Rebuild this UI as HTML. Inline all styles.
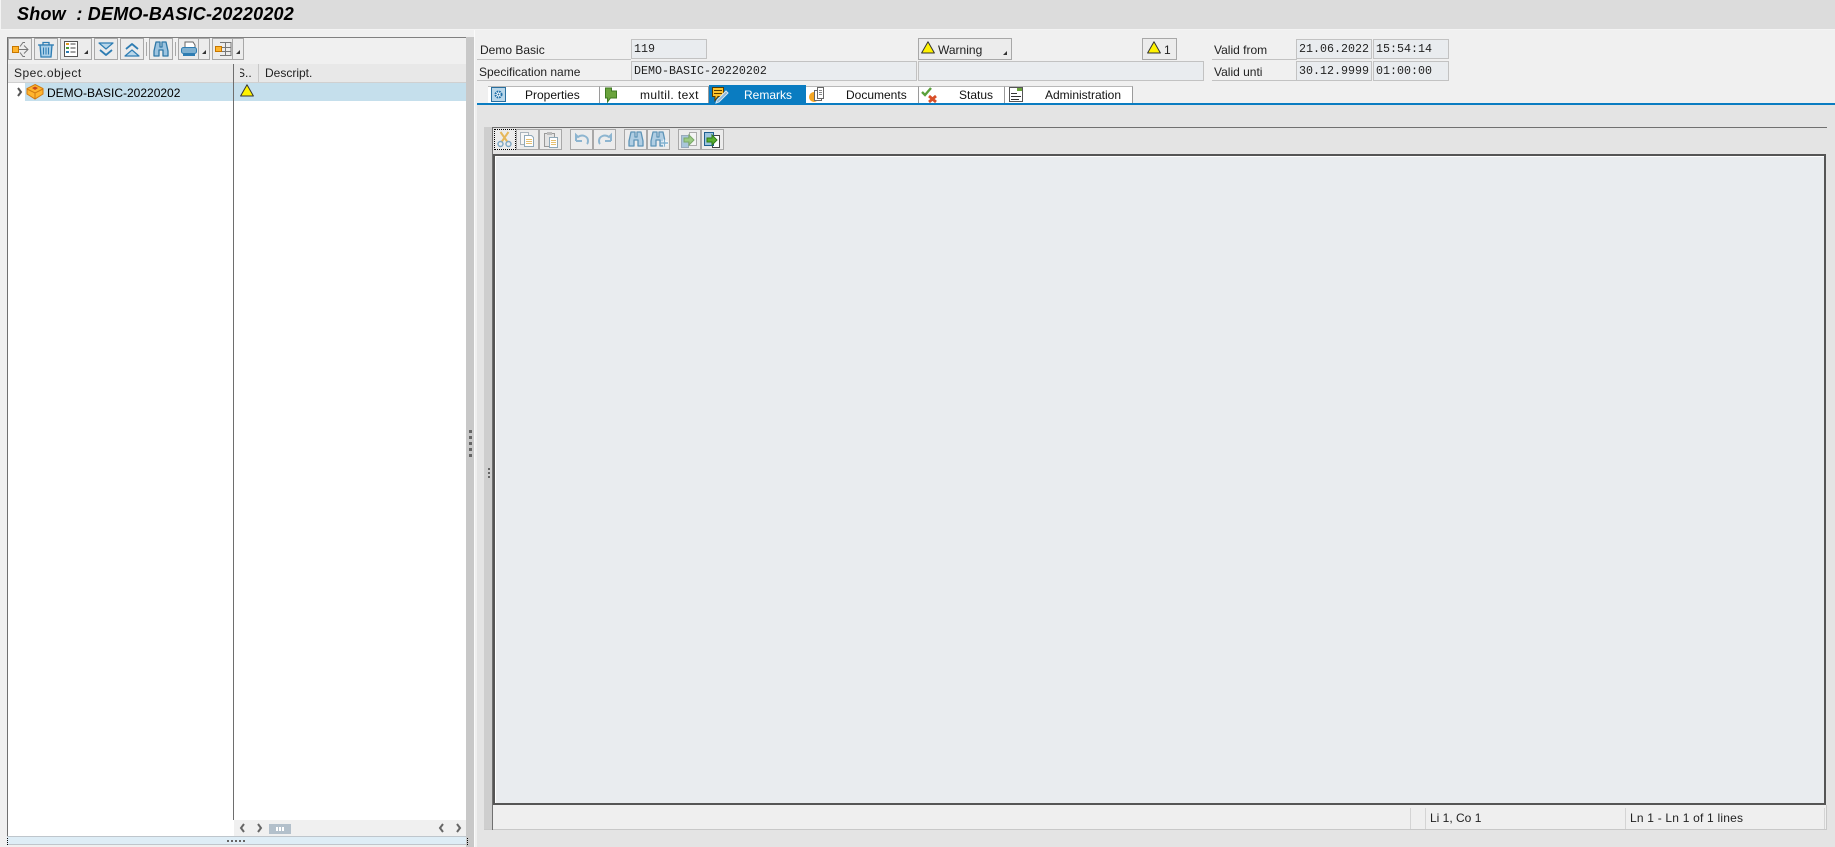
<!DOCTYPE html>
<html><head><meta charset="utf-8"><style>
html,body{margin:0;padding:0;background:#f0f0f0}
body{width:1835px;height:847px;position:relative;overflow:hidden;font-family:"Liberation Sans",sans-serif;font-size:12px;color:#000}
div{position:absolute;box-sizing:border-box}
.t{white-space:pre;line-height:14px;height:14px}
.m{font-family:"Liberation Mono",monospace;font-size:11.67px;color:#222}
.f{background:#e9ecef;border:1px solid #c2c2c2}
.b{background:#ececec;border:1px solid #a8a8a8}
.tab{background:#fff;border-top:1px solid #b8b8b8;border-right:1px solid #9a9a9a;height:17px;top:86px}
.u{height:1px;background:#c2c2c2}
svg{position:absolute;left:0;top:0}
</style></head><body>
<div style="left:0;top:0;width:1835px;height:30px;background:#f4f4f4"></div>
<div style="left:1px;top:0;width:1834px;height:29px;background:#dcdcdc"></div>
<div class="t" style="left:17px;top:4px;font:italic bold 18px/20px 'Liberation Sans',sans-serif;height:20px;letter-spacing:.22px">Show  : DEMO-BASIC-20220202</div>

<!-- left panel -->
<div style="left:7px;top:37px;width:460px;height:800px;background:#fff;border-left:1px solid #707070;border-top:1px solid #808080"></div>
<div style="left:8px;top:38px;width:459px;height:26px;background:#f0f0f0"></div>
<div style="left:8px;top:64px;width:459px;height:19px;background:#e8e8e8;border-bottom:1px solid #d0d0d0"></div>
<div style="left:25px;top:83px;width:441px;height:18px;background:#c5dfec"></div>
<div style="left:233px;top:64px;width:1px;height:756px;background:#6e6e6e"></div>
<div style="left:258px;top:64px;width:1px;height:18px;background:#c8c8c8"></div>
<div class="t" style="left:14px;top:66px;color:#222;letter-spacing:.45px">Spec.object</div>
<div style="left:240px;top:66px;width:16px;height:14px;overflow:hidden"><div class="t" style="left:-3px;top:0;color:#222">S..</div></div>
<div class="t" style="left:265px;top:66px;color:#222">Descript.</div>
<div class="t" style="left:47px;top:86px">DEMO-BASIC-20220202</div>

<div class="b" style="left:8px;top:38px;width:24px;height:22px"></div>
<div class="b" style="left:34px;top:38px;width:24px;height:22px"></div>
<div class="b" style="left:60px;top:38px;width:32px;height:22px"></div>
<div class="b" style="left:94px;top:38px;width:24px;height:22px"></div>
<div class="b" style="left:120px;top:38px;width:24px;height:22px"></div>
<div style="left:146px;top:42px;width:1px;height:14px;background:#a8a8a8"></div>
<div class="b" style="left:149px;top:38px;width:24px;height:22px"></div>
<div style="left:175px;top:42px;width:1px;height:14px;background:#a8a8a8"></div>
<div class="b" style="left:178px;top:38px;width:32px;height:22px"></div>
<div style="left:198px;top:38px;width:1px;height:22px;background:#a8a8a8"></div>
<div class="b" style="left:212px;top:38px;width:32px;height:22px"></div>
<div style="left:232px;top:38px;width:1px;height:22px;background:#a8a8a8"></div>

<!-- bottom scroll + sash -->
<div style="left:234px;top:820px;width:233px;height:17px;background:#f0f0f0"></div>
<div style="left:269px;top:824px;width:22px;height:10px;background:#b3c0cb"></div>
<div style="left:276px;top:827px;width:2px;height:4px;background:#fff"></div>
<div style="left:279px;top:827px;width:2px;height:4px;background:#fff"></div>
<div style="left:282px;top:827px;width:2px;height:4px;background:#fff"></div>
<div style="left:7px;top:836px;width:460px;height:9px;background:#deedf6;border-top:1px solid #bfc6cc;border-bottom:1px solid #bfc6cc"></div>

<!-- vertical sash -->
<div style="left:466px;top:37px;width:8px;height:810px;background:#c8c8c8"></div>
<div style="left:477px;top:105px;width:1358px;height:742px;background:#e4e4e4"></div>
<div style="left:474px;top:30px;width:1px;height:817px;background:#fafafa"></div>

<!-- header fields -->
<div class="t" style="left:480px;top:43px;color:#222">Demo Basic</div>
<div class="t" style="left:479px;top:65px;color:#222">Specification name</div>
<div class="u" style="left:477px;top:59px;width:154px"></div>
<div class="u" style="left:477px;top:80px;width:154px"></div>
<div class="f" style="left:631px;top:39px;width:76px;height:20px"></div>
<div class="t m" style="left:634px;top:42px">119</div>
<div class="f" style="left:631px;top:61px;width:286px;height:20px"></div>
<div class="t m" style="left:634px;top:64px">DEMO-BASIC-20220202</div>
<div class="f" style="left:918px;top:61px;width:286px;height:20px"></div>
<div class="b" style="left:918px;top:38px;width:94px;height:22px"></div>
<div class="t" style="left:938px;top:43px;color:#222">Warning</div>
<div class="b" style="left:1142px;top:38px;width:35px;height:22px"></div>
<div class="t" style="left:1164px;top:43px;color:#222">1</div>
<div class="t" style="left:1214px;top:43px;color:#222">Valid from</div>
<div class="t" style="left:1214px;top:65px;color:#222">Valid unti</div>
<div class="u" style="left:1212px;top:59px;width:85px"></div>
<div class="u" style="left:1212px;top:80px;width:85px"></div>
<div class="f" style="left:1296px;top:39px;width:76px;height:20px"></div>
<div class="f" style="left:1373px;top:39px;width:76px;height:20px"></div>
<div class="f" style="left:1296px;top:61px;width:76px;height:20px"></div>
<div class="f" style="left:1373px;top:61px;width:76px;height:20px"></div>
<div class="t m" style="left:1299px;top:42px">21.06.2022</div>
<div class="t m" style="left:1376px;top:42px">15:54:14</div>
<div class="t m" style="left:1299px;top:64px">30.12.9999</div>
<div class="t m" style="left:1376px;top:64px">01:00:00</div>

<!-- tabs -->
<div class="tab" style="left:488px;width:112px"></div>
<div class="tab" style="left:600px;width:109px"></div>
<div style="left:709px;top:85px;width:97px;height:18px;background:#0a7cc1"></div>
<div class="tab" style="left:806px;width:113px"></div>
<div class="tab" style="left:919px;width:86px"></div>
<div class="tab" style="left:1005px;width:128px"></div>
<div style="left:477px;top:103px;width:1358px;height:2px;background:#0a7cc1"></div>
<div class="t" style="left:525px;top:88px;color:#111">Properties</div>
<div class="t" style="left:640px;top:88px;color:#111;letter-spacing:.4px">multil. text</div>
<div class="t" style="left:744px;top:88px;color:#fff">Remarks</div>
<div class="t" style="left:846px;top:88px;color:#111">Documents</div>
<div class="t" style="left:959px;top:88px;color:#111">Status</div>
<div class="t" style="left:1045px;top:88px;color:#111">Administration</div>

<!-- editor -->
<div style="left:484px;top:127px;width:8px;height:703px;background:#cecece"></div>
<div style="left:484px;top:829px;width:1343px;height:1px;background:#c8c8c8"></div>
<div style="left:492px;top:127px;width:1335px;height:1px;background:#707070"></div>
<div style="left:492px;top:127px;width:1px;height:703px;background:#707070"></div>
<div style="left:493px;top:154px;width:1333px;height:651px;background:#fff;border:2px solid #555"></div>
<div style="left:496px;top:157px;width:1328px;height:646px;background:#e9ecef"></div>
<div style="left:493px;top:805px;width:1333px;height:24px;background:#efefef"></div>
<div style="left:1826px;top:805px;width:1px;height:25px;background:#c8c8c8"></div>
<div style="left:1410px;top:808px;width:1px;height:21px;background:#d4d4d4"></div>
<div style="left:1425px;top:808px;width:1px;height:21px;background:#d4d4d4"></div>
<div style="left:1625px;top:808px;width:1px;height:21px;background:#d4d4d4"></div>
<div style="left:1824px;top:808px;width:1px;height:21px;background:#d4d4d4"></div>
<div class="t" style="left:1430px;top:811px;color:#222">Li 1, Co 1</div>
<div class="t" style="left:1630px;top:811px;color:#222;letter-spacing:.2px">Ln 1 - Ln 1 of 1 lines</div>

<div class="b" style="left:494px;top:129px;width:22px;height:21px;border:1px dotted #000"></div>
<div class="b" style="left:516px;top:129px;width:23px;height:21px"></div>
<div class="b" style="left:539px;top:129px;width:23px;height:21px"></div>
<div class="b" style="left:570px;top:129px;width:23px;height:21px"></div>
<div class="b" style="left:593px;top:129px;width:23px;height:21px"></div>
<div class="b" style="left:624px;top:129px;width:23px;height:21px"></div>
<div class="b" style="left:647px;top:129px;width:23px;height:21px"></div>
<div class="b" style="left:678px;top:129px;width:23px;height:21px"></div>
<div class="b" style="left:701px;top:129px;width:23px;height:21px"></div>

<svg width="1835" height="847" viewBox="0 0 1835 847">
<defs>
<g id="tri"><path d="M7 .8L13.4 12H.6Z" fill="#fff200" stroke="#333" stroke-width="1" stroke-linejoin="round"/></g>
<g id="bino" fill="#9cc4e0" stroke="#2f77a6" stroke-linejoin="round"><path d="M3 1h4v5h2V1h4l2 9v5H10V9H6v6H1v-5Z" stroke-width="1.3"/></g>
</defs>

<!-- toolbar 1 icons -->
<g transform="translate(12,41)"><rect x=".5" y="5.500" width="6" height="6" fill="#ffb52e" stroke="#c77700"/><path d="M7 8.500h9M12 4.500l4 4-4 4M8 5.500l3-4h2M8 11.500l3 4h2" fill="none" stroke="#777" stroke-width="1"/></g>
<g transform="translate(38,41)" fill="none" stroke="#2e7db3" stroke-width="1.3"><path d="M0 4h16M5 4V1.500h6V4" /><path d="M2 4l1 12h10l1-12Z" fill="#a9cfe8"/><path d="M5.500 6.500v7M8 6.500v7M10.500 6.500v7" stroke-width="1"/></g>
<g transform="translate(64,41)"><rect x=".5" y=".5" width="13" height="15" fill="#fff" stroke="#555"/><rect x="2" y="2" width="3" height="2" fill="#e09a20"/><rect x="2" y="6" width="3" height="2" fill="#4a9a3a"/><rect x="2" y="10" width="3" height="2" fill="#2e7db3"/><path d="M6.500 3h5M6.500 7h5M6.500 11h5" stroke="#444"/></g>
<path d="M84 54h4v-4Z" fill="#333"/>
<g transform="translate(99,42)" fill="#b9d7ea" stroke="#2e7db3" stroke-width="1.2" stroke-linejoin="round"><path d="M0 1h14L7 7Z"/><path d="M1 8l6 5 6-5" fill="none" stroke-width="1.8"/></g>
<g transform="translate(125,42)" fill="#b9d7ea" stroke="#2e7db3" stroke-width="1.2" stroke-linejoin="round"><path d="M0 14h14L7 8Z"/><path d="M1 7l6-5 6 5" fill="none" stroke-width="1.8"/></g>
<use href="#bino" transform="translate(153,41)"/>
<g transform="translate(181,41)"><path d="M4 1h8l2 3v3H4Z" fill="#fff" stroke="#666"/><rect x=".5" y="6.500" width="15" height="6" rx="2" fill="#7fb0d0" stroke="#2e7db3"/><rect x="2" y="13" width="12" height="2" fill="#2e7db3"/></g>
<path d="M202 54h4v-4Z" fill="#333"/>
<g transform="translate(215,41)"><path d="M5 1.500h11v13H5M5 6.500h11M5 10.500h11M10.500 1.500v13M16 1.500v13" fill="none" stroke="#777"/><rect x=".5" y="5.500" width="6" height="5" fill="#ffb52e" stroke="#c77700"/></g>
<path d="M236 54h4v-4Z" fill="#333"/>

<!-- tree -->
<path d="M18 88l3 4-3 4" fill="none" stroke="#555" stroke-width="2"/>
<g transform="translate(27,84)"><path d="M8 .5l8 4v5.500l-8 5-8-5V4.500Z" fill="#ffb52e" stroke="#d07a10"/><path d="M0 5l8 4 8-4M8 9v6" fill="none" stroke="#d07a10"/><path d="M5 4l3-1.500 3 1.500-3 2Z" fill="#c8481a"/></g>
<use href="#tri" transform="translate(240,84)"/>

<!-- warning buttons -->
<use href="#tri" transform="translate(921,41)"/>
<use href="#tri" transform="translate(1147,41)"/>
<path d="M1003 55h4v-4Z" fill="#333"/>

<!-- sash grips -->
<g fill="#666"><rect x="469" y="430" width="3" height="3"/><rect x="469" y="436" width="3" height="3"/><rect x="469" y="442" width="3" height="3"/><rect x="469" y="448" width="3" height="3"/><rect x="469" y="454" width="3" height="3"/>
<rect x="488" y="468" width="2" height="2"/><rect x="488" y="472" width="2" height="2"/><rect x="488" y="476" width="2" height="2"/>
<rect x="227" y="840" width="2" height="2"/><rect x="231" y="840" width="2" height="2"/><rect x="235" y="840" width="2" height="2"/><rect x="239" y="840" width="2" height="2"/><rect x="243" y="840" width="2" height="2"/></g>
<path d="M7.500 838v7M467.500 838v7" stroke="#000" stroke-dasharray="1 1"/>

<!-- scroll arrows -->
<g fill="none" stroke="#666" stroke-width="2"><path d="M244 824l-3 4 3 4M258 824l3 4-3 4M443 824l-3 4 3 4M457 824l3 4-3 4"/></g>

<!-- tab icons -->
<g transform="translate(491,87)"><rect x=".5" y=".5" width="14" height="14" fill="#b9d7ea" stroke="#2a6f9e"/><circle cx="7.500" cy="7.500" r="3" fill="#fff" stroke="#1f6fa8" stroke-width="2" stroke-dasharray="1.600 .8"/><circle cx="7.500" cy="7.500" r="1" fill="#1f6fa8"/></g>
<path d="M605.500 88h6v3h5v7h-6l-3 4v-4h-2Z" fill="#6aa33c" stroke="#3f7a22"/>
<g transform="translate(712,87)"><path d="M.5 .5h11v9H6l-3 4v-4H.5Z" fill="#ffc52e" stroke="#5a3b00"/><path d="M2 3.500h8M2 6.500h8" stroke="#5a3b00"/><path d="M5 13L14 4l2 2-9 9-3 1Z" fill="#8fb8d8" stroke="#dbe8f2"/></g>
<g transform="translate(809,87)"><circle cx="5" cy="10" r="5" fill="#f5a623"/><path d="M5.500 3.500h7v10h-7Z" fill="#fff" stroke="#666"/><path d="M8.500 .5h6v11h-6Z" fill="#fff" stroke="#666"/><path d="M10 3.500h3M10 5.500h3M10 7.500h3" stroke="#888"/></g>
<path d="M922 92l3 3 6-7" fill="none" stroke="#5aa03a" stroke-width="2.400"/>
<path d="M929 96l7 6M936 96l-7 6" fill="none" stroke="#d8502a" stroke-width="2.800"/>
<g transform="translate(1009,87)"><rect x=".5" y=".5" width="13" height="14" fill="#fff" stroke="#555"/><rect x="8" y="1" width="5" height="3" fill="#6aa33c"/><path d="M2 6.500h6M2 9.500h10M2 12.500h8" stroke="#333"/></g>

<!-- editor toolbar icons -->
<g transform="translate(497,131)" fill="none"><path d="M3.500 1l7 10M11.500 1L4.500 11" stroke="#e6b85a" stroke-width="2"/><circle cx="3.500" cy="13" r="2.500" stroke="#7fa8c4" stroke-width="1.400"/><circle cx="11.500" cy="13" r="2.500" stroke="#7fa8c4" stroke-width="1.400"/></g>
<g transform="translate(520,132)"><path d="M.5 .5h8v12H.5Z" fill="#f6f6f6" stroke="#aab4bc"/><path d="M4.500 3.500h7l2 2v9h-9Z" fill="#fff" stroke="#8fa8b8"/><path d="M6 7.500h6M6 9.500h6M6 11.500h6" stroke="#e6c070"/></g>
<g transform="translate(543,131)"><path d="M1.500 2.500h10v13h-10Z" fill="#e4e4e4" stroke="#999"/><rect x="4" y="1" width="5" height="3" fill="#bbb"/><path d="M6.500 6.500h8v10h-8Z" fill="#fff" stroke="#8fa8b8"/><path d="M8 9.500h5M8 11.500h5M8 13.500h5" stroke="#e6c070"/></g>
<g transform="translate(574,132)" fill="none" stroke="#8db5d0" stroke-width="2"><path d="M2 9V3l2 2c4-3 10-1 10 4 0 1 0 2-1 3M2 9h6"/></g>
<g transform="translate(597,132)" fill="none" stroke="#8db5d0" stroke-width="2"><path d="M14 9V3l-2 2C8 2 2 4 2 9c0 1 0 2 1 3M14 9H8"/></g>
<use href="#bino" transform="translate(628,131)" opacity=".75"/>
<use href="#bino" transform="translate(650,131)" opacity=".75"/>
<path d="M661 143h7M664.500 139.500v7" stroke="#fff" stroke-width="3"/>
<path d="M661 143h7M664.500 139.500v7" stroke="#7fb0d0" stroke-width="1.400"/>
<g transform="translate(681,132)"><path d="M8.500 .5h7v13h-7Z" fill="#f4f4f4" stroke="#aaa"/><path d="M.5 3.500h7v12h-7Z" fill="#a9c6da" stroke="#9ab"/><path d="M3 6h5V3l5 5-5 5v-3H3Z" fill="#9ccb84" stroke="#7aa868"/></g>
<g transform="translate(704,132)"><path d="M8.500 3.500h7v12h-7Z" fill="#fff" stroke="#444"/><path d="M.5 .5h9v13h-9Z" fill="#9cc4e0" stroke="#1f5f8f"/><path d="M3 6h5V3l5 5-5 5v-3H3Z" fill="#5bb030" stroke="#2e7a14"/></g>
</svg>
</body></html>
